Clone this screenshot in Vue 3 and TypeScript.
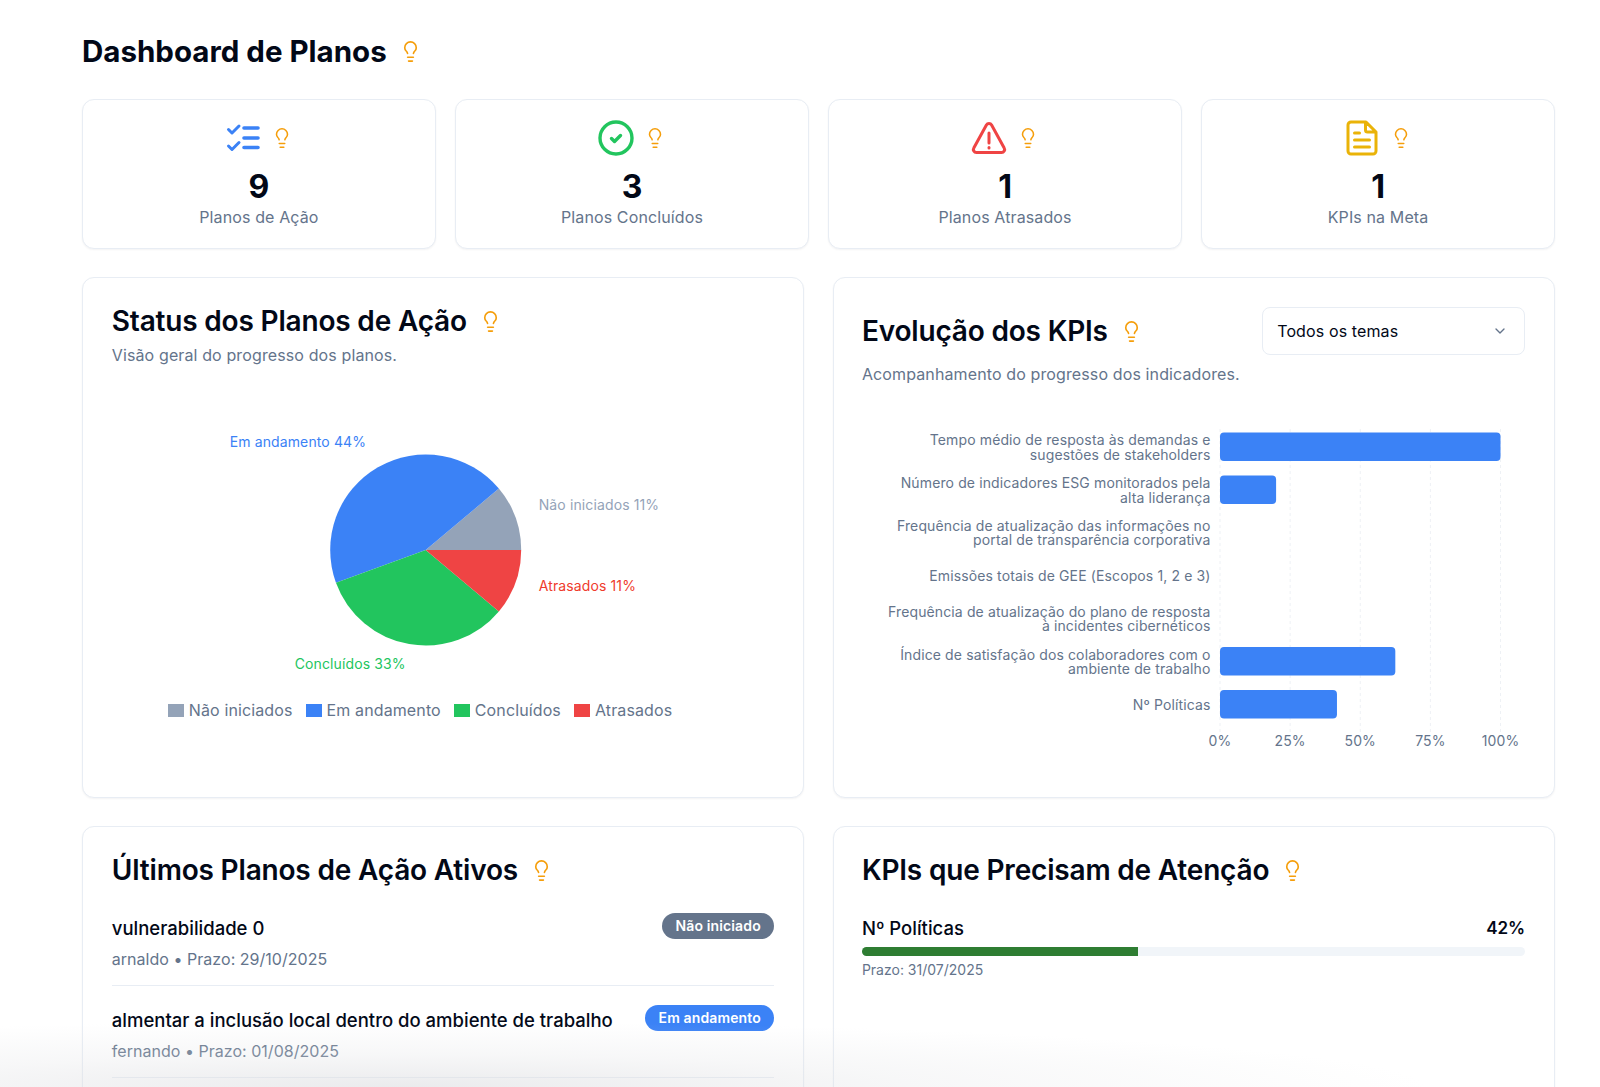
<script setup lang="ts">
interface Stat {
  value: number
  label: string
  icon: string
}

const stats: Stat[] = [
  { value: 9, label: 'Planos de Ação', icon: 'list' },
  { value: 3, label: 'Planos Concluídos', icon: 'check' },
  { value: 1, label: 'Planos Atrasados', icon: 'alert' },
  { value: 1, label: 'KPIs na Meta', icon: 'doc' },
]

const cx = 200
const cy = 100
const r = 95.5

const slices = [
  { name: 'Não iniciados', color: '#94a3b8', from: 0, to: 40 },
  { name: 'Em andamento', color: '#3b82f6', from: 40, to: 200 },
  { name: 'Concluídos', color: '#22c55e', from: 200, to: 320 },
  { name: 'Atrasados', color: '#ef4444', from: 320, to: 360 },
]

const slicePath = (from: number, to: number) => {
  const a = (from * Math.PI) / 180
  const b = (to * Math.PI) / 180
  const large = to - from > 180 ? 1 : 0
  return `M${cx} ${cy}L${cx + r * Math.cos(a)} ${cy - r * Math.sin(a)}A${r} ${r} 0 ${large} 0 ${cx + r * Math.cos(b)} ${cy - r * Math.sin(b)}Z`
}

const chartLeft = 358
const chartWidth = 280.5
const ticks = [0, 25, 50, 75, 100]

const kpis = [
  { lines: ['Tempo médio de resposta às demandas e', 'sugestões de stakeholders'], value: 100 },
  { lines: ['Número de indicadores ESG monitorados pela', 'alta liderança'], value: 20 },
  { lines: ['Frequência de atualização das informações no', 'portal de transparência corporativa'], value: 0 },
  { lines: ['Emissões totais de GEE (Escopos 1, 2 e 3)'], value: 0 },
  { lines: ['Frequência de atualização do plano de resposta', 'à incidentes cibernéticos'], value: 0 },
  { lines: ['Índice de satisfação dos colaboradores com o', 'ambiente de trabalho'], value: 62.5 },
  { lines: ['Nº Políticas'], value: 41.7 },
]

const plans = [
  { title: 'vulnerabilidade 0', owner: 'arnaldo', due: '29/10/2025', status: 'Não iniciado', kind: 'idle' },
  { title: 'almentar a inclusão local dentro do ambiente de trabalho', owner: 'fernando', due: '01/08/2025', status: 'Em andamento', kind: 'active' },
]
</script>

<template>
  <div class="page">
    <div class="page-title">
      <h1>Dashboard de Planos</h1>
      <svg class="bulb" viewBox="0 0 24 24"><path d="M9 18h6M10 22h4M15.09 14c.18-.98.65-1.74 1.41-2.5A4.65 4.65 0 0 0 18 8 6 6 0 0 0 6 8c0 1 .23 2.23 1.5 3.5A4.61 4.61 0 0 1 8.91 14" /></svg>
    </div>

    <div class="stats">
      <div v-for="s in stats" :key="s.label" class="card stat">
        <div class="stat-icon">
          <svg v-if="s.icon === 'list'" class="icon" viewBox="0 0 36 36" stroke="#3b82f6"><path d="M3.5 9.5l3.5 3.5 7-7M3.5 26l3.5 3.5 7-7" /><path class="bars-strokes" d="M19 8h14M19 18h14M19 27.5h14" /></svg>
          <svg v-else-if="s.icon === 'check'" class="icon thick" viewBox="0 0 36 36" stroke="#22c55e"><circle cx="18" cy="18" r="16" /><path d="M13.5 18.5l3 3 6-6" /></svg>
          <svg v-else-if="s.icon === 'alert'" class="icon" viewBox="0 0 36 36" stroke="#ef4444"><path d="M15.4 5L2.8 28a3 3 0 0 0 2.6 4.5h25.2a3 3 0 0 0 2.6-4.5L20.6 5a3 3 0 0 0-5.2 0zM18 13v10M18 27.5v.5" /></svg>
          <svg v-else class="icon" viewBox="0 0 36 36" stroke="#eab308"><path d="M7 2h15l10 10v19a3 3 0 0 1-3 3H7a3 3 0 0 1-3-3V5a3 3 0 0 1 3-3zM21.5 2v8a2 2 0 0 0 2 2H32M10.5 13h5M10.5 20h15M10.5 27h15" /></svg>
          <svg class="bulb small" viewBox="0 0 24 24"><path d="M9 18h6M10 22h4M15.09 14c.18-.98.65-1.74 1.41-2.5A4.65 4.65 0 0 0 18 8 6 6 0 0 0 6 8c0 1 .23 2.23 1.5 3.5A4.61 4.61 0 0 1 8.91 14" /></svg>
        </div>
        <div class="stat-value">{{ s.value }}</div>
        <div class="stat-label">{{ s.label }}</div>
      </div>
    </div>

    <div class="two-col charts">
      <section class="card panel">
        <div class="panel-title">
          <h2>Status dos Planos de Ação</h2>
          <svg class="bulb" viewBox="0 0 24 24"><path d="M9 18h6M10 22h4M15.09 14c.18-.98.65-1.74 1.41-2.5A4.65 4.65 0 0 0 18 8 6 6 0 0 0 6 8c0 1 .23 2.23 1.5 3.5A4.61 4.61 0 0 1 8.91 14" /></svg>
        </div>
        <p class="sub status-sub">Visão geral do progresso dos planos.</p>
        <div class="pie-box">
          <svg class="pie" width="460" height="250" viewBox="-12.7 -25 460 250">
            <path v-for="p in slices" :key="p.name" :d="slicePath(p.from, p.to)" :fill="p.color" />
            <text x="313" y="60" fill="#94a3b8">Não iniciados 11%</text>
            <text x="4" y="-3" fill="#3b82f6">Em andamento 44%</text>
            <text x="69" y="219" fill="#22c55e">Concluídos 33%</text>
            <text x="313" y="141" fill="#ef3b2c">Atrasados 11%</text>
          </svg>
          <div class="legend">
            <span v-for="p in slices" :key="p.name" class="legend-item">
              <i :style="{ background: p.color }"></i>{{ p.name }}
            </span>
          </div>
        </div>
      </section>

      <section class="card panel">
        <div class="kpi-head">
          <div class="panel-title">
            <h2>Evolução dos KPIs</h2>
            <svg class="bulb" viewBox="0 0 24 24"><path d="M9 18h6M10 22h4M15.09 14c.18-.98.65-1.74 1.41-2.5A4.65 4.65 0 0 0 18 8 6 6 0 0 0 6 8c0 1 .23 2.23 1.5 3.5A4.61 4.61 0 0 1 8.91 14" /></svg>
          </div>
          <div class="select">
            <span>Todos os temas</span>
            <svg viewBox="0 0 24 24"><path d="M6 9l6 6 6-6" /></svg>
          </div>
        </div>
        <p class="sub kpi-sub">Acompanhamento do progresso dos indicadores.</p>
        <svg class="bars" width="662" height="330" viewBox="0 0 662 330">
          <line v-for="t in ticks" :key="t" class="grid-line" :x1="chartLeft + (chartWidth * t) / 100" :x2="chartLeft + (chartWidth * t) / 100" y1="0" y2="303" />
          <g v-for="(k, i) in kpis" :key="i">
            <rect v-if="k.value" :x="chartLeft" :y="3.5 + i * 42.9" :width="(chartWidth * k.value) / 100" height="28.6" rx="4" fill="#3b82f6" />
            <text v-for="(l, j) in k.lines" :key="j" class="bar-label" :x="chartLeft - 9.5" :y="18.4 + i * 42.9 + (j - (k.lines.length - 1) / 2) * 14.5 + 5">{{ l }}</text>
          </g>
          <text v-for="t in ticks" :key="'t' + t" class="tick" :x="chartLeft + (chartWidth * t) / 100" y="316.5">{{ t }}%</text>
        </svg>
      </section>
    </div>

    <div class="two-col lists">
      <section class="card panel">
        <div class="panel-title">
          <h2>Últimos Planos de Ação Ativos</h2>
          <svg class="bulb" viewBox="0 0 24 24"><path d="M9 18h6M10 22h4M15.09 14c.18-.98.65-1.74 1.41-2.5A4.65 4.65 0 0 0 18 8 6 6 0 0 0 6 8c0 1 .23 2.23 1.5 3.5A4.61 4.61 0 0 1 8.91 14" /></svg>
        </div>
        <div class="plans">
          <div v-for="p in plans" :key="p.title" class="plan">
            <div class="plan-top">
              <div class="plan-title">{{ p.title }}</div>
              <span class="badge" :class="p.kind">{{ p.status }}</span>
            </div>
            <div class="plan-meta">{{ p.owner }} • Prazo: {{ p.due }}</div>
          </div>
        </div>
      </section>

      <section class="card panel">
        <div class="panel-title">
          <h2>KPIs que Precisam de Atenção</h2>
          <svg class="bulb" viewBox="0 0 24 24"><path d="M9 18h6M10 22h4M15.09 14c.18-.98.65-1.74 1.41-2.5A4.65 4.65 0 0 0 18 8 6 6 0 0 0 6 8c0 1 .23 2.23 1.5 3.5A4.61 4.61 0 0 1 8.91 14" /></svg>
        </div>
        <div class="kpi-row">
          <span>Nº Políticas</span>
          <strong>42%</strong>
        </div>
        <div class="track"><div class="fill" :style="{ width: '41.7%' }"></div></div>
        <div class="due">Prazo: 31/07/2025</div>
      </section>
    </div>

    <div class="fade"></div>
  </div>
</template>

<style scoped>
.page {
  position: relative;
  box-sizing: border-box;
  height: 1087px;
  overflow: hidden;
  padding: 30px 45px 0 82px;
  background: #fff;
  color: #020817;
  font-family: Inter, "Liberation Sans", sans-serif;
  letter-spacing: 0.12px;
}

.page-title {
  display: flex;
  align-items: center;
  gap: 12px;
  height: 42px;
  margin-bottom: 27px;
}

h1 {
  margin: 0;
  font-size: 29.5px;
  line-height: 42px;
  font-weight: 700;
  letter-spacing: 0;
}

h2 {
  margin: 0;
  font-size: 28px;
  line-height: 34px;
  font-weight: 600;
  letter-spacing: -0.18px;
}

.bulb {
  width: 23px;
  height: 23px;
  flex: none;
  fill: none;
  stroke: #f59e0b;
  stroke-width: 1.7;
  stroke-linecap: round;
  stroke-linejoin: round;
}

.bulb.small {
  width: 22px;
  height: 22px;
}

.card {
  box-sizing: border-box;
  background: #fff;
  border: 1px solid #e8edf4;
  border-radius: 12px;
  box-shadow: 0 1px 2px rgba(15, 23, 42, 0.05);
}

.stats {
  display: grid;
  grid-template-columns: repeat(4, 1fr);
  gap: 19.2px;
}

.stat {
  height: 150px;
  display: flex;
  flex-direction: column;
  align-items: center;
  padding-top: 19px;
}

.stat-icon {
  display: flex;
  align-items: center;
  gap: 10px;
  height: 37px;
}

.icon {
  width: 36px;
  height: 36px;
  fill: none;
  stroke-width: 3;
  stroke-linecap: round;
  stroke-linejoin: round;
}

.icon.thick {
  stroke-width: 3.4;
}

.bars-strokes {
  stroke-width: 3.6;
}

.stat-value {
  margin-top: 12px;
  font-size: 32px;
  line-height: 38px;
  font-weight: 700;
  letter-spacing: 0;
}

.stat-label {
  margin-top: -1px;
  font-size: 16px;
  line-height: 24px;
  color: #64748b;
}

.two-col {
  display: grid;
  grid-template-columns: 1fr 1fr;
  gap: 28.8px;
}

.charts {
  margin-top: 28px;
}

.charts .panel {
  height: 521px;
}

.lists {
  margin-top: 28px;
}

.lists .panel {
  height: 400px;
}

.panel {
  padding: 26px 28.8px;
}

.panel:last-child {
  padding-left: 28px;
}

.panel-title {
  display: flex;
  align-items: center;
  gap: 12px;
}

.sub {
  margin: 0;
  font-size: 16px;
  line-height: 24px;
  color: #64748b;
}

.status-sub {
  margin-top: 5px;
}

.pie-box {
  display: flex;
  flex-direction: column;
  align-items: center;
  margin-top: 58px;
}

.pie text {
  font-size: 14px;
}

.legend {
  display: flex;
  gap: 13px;
  margin-top: 23px;
  margin-right: 46px;
  font-size: 16px;
  line-height: 24px;
  color: #64748b;
}

.legend-item {
  display: flex;
  align-items: center;
}

.legend-item i {
  width: 16px;
  height: 13px;
  margin-right: 5px;
}

.kpi-head {
  display: flex;
  align-items: center;
  justify-content: space-between;
  height: 48px;
  margin-top: 3px;
}

.select {
  box-sizing: border-box;
  width: 263px;
  height: 48px;
  display: flex;
  align-items: center;
  justify-content: space-between;
  padding: 0 16px 0 14px;
  border: 1px solid #e8edf4;
  border-radius: 8px;
  font-size: 16px;
}

.select svg {
  width: 16px;
  height: 16px;
  fill: none;
  stroke: #64748b;
  stroke-width: 2;
  stroke-linecap: round;
  stroke-linejoin: round;
}

.kpi-sub {
  margin-top: 7px;
}

.bars {
  display: block;
  margin-top: 43px;
}

.grid-line {
  stroke: #eef1f5;
  stroke-dasharray: 3 3;
}

.bar-label {
  font-size: 14px;
  fill: #64748b;
  text-anchor: end;
}

.tick {
  font-size: 14px;
  fill: #64748b;
  text-anchor: middle;
}

.plans {
  margin-top: 23px;
}

.plan {
  padding-bottom: 14.5px;
  margin-bottom: 16px;
  border-bottom: 1px solid #e8edf4;
}

.plan-top {
  display: flex;
  justify-content: space-between;
  align-items: flex-start;
  gap: 16px;
}

.plan-title {
  font-size: 18.5px;
  line-height: 28px;
  font-weight: 500;
  margin-top: 4px;
  letter-spacing: 0;
}

.badge {
  flex: none;
  margin-top: 3px;
  padding: 0 13.5px;
  height: 26px;
  border-radius: 13px;
  color: #fff;
  font-size: 14px;
  line-height: 26px;
  font-weight: 600;
}

.badge.idle {
  background: #64748b;
}

.badge.active {
  background: #3b82f6;
}

.plan-meta {
  margin-top: 4.5px;
  font-size: 16px;
  line-height: 24px;
  color: #64748b;
  letter-spacing: 0.03px;
}

.kpi-row {
  display: flex;
  justify-content: space-between;
  margin-top: 27px;
  font-size: 18.5px;
  line-height: 28px;
  font-weight: 500;
  letter-spacing: 0;
}

.kpi-row strong {
  font-size: 17px;
  font-weight: 600;
}

.track {
  height: 8.5px;
  margin-top: 5px;
  border-radius: 5px;
  background: #f1f5f9;
  overflow: hidden;
}

.fill {
  height: 100%;
  background: #2e7d32;
}

.due {
  margin-top: 3.5px;
  font-size: 14px;
  line-height: 21px;
  color: #64748b;
  letter-spacing: 0;
}

.fade {
  position: absolute;
  left: 0;
  right: 0;
  bottom: 0;
  height: 68px;
  background: radial-gradient(ellipse 1030px 66px at 25% 100%, rgba(222, 223, 226, 0.62), rgba(222, 223, 226, 0.24) 50%, rgba(222, 223, 226, 0));
  pointer-events: none;
}
</style>
